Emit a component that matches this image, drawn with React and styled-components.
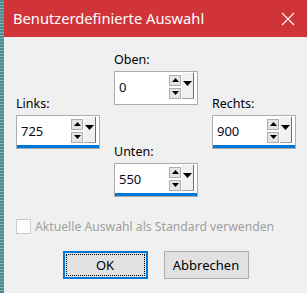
import React from 'react'
import styled, { createGlobalStyle } from 'styled-components'

const GlobalStyle = createGlobalStyle`
  html, body {
    margin: 0;
    padding: 0;
    overflow: hidden;
    background: #f0f0f0;
  }
  body {
    font-family: 'Noto Sans', 'Open Sans', Arial, sans-serif;
    font-size: 12.5px;
    color: #000;
  }
`

const Screen = styled.div`
  display: flex;
  width: 307px;
  height: 293px;
`
const Backdrop = styled.div`
  width: 4px;
  flex-shrink: 0;
  background: repeating-linear-gradient(
    to bottom,
    #4e8c8d 0px,
    #4e8c8d 2px,
    #7db1b1 2px,
    #7db1b1 3px
  );
`
const Dialog = styled.div`
  flex: 1;
  display: flex;
  flex-direction: column;
  background: #f0f0f0;
`
const TitleBar = styled.div`
  height: 37px;
  flex-shrink: 0;
  display: flex;
  align-items: center;
  justify-content: space-between;
  padding: 0 12px 0 9px;
  background: #d13438;
  color: #fff;
  font-size: 14.7px;
`
const Title = styled.span`
  margin-top: -1px;
`
const CloseIcon = styled.svg`
  width: 14px;
  height: 14px;
  display: block;
`
const Body = styled.div`
  display: flex;
  flex-direction: column;
  padding: 15px 0 0 12px;
`
const Fields = styled.div`
  display: flex;
  gap: 14px;
`
const Column = styled.div`
  display: flex;
  flex-direction: column;
  gap: ${(p) => p.$gap || 0}px;
  margin-top: ${(p) => p.$offset || 0}px;
`
const Field = styled.div`
  display: flex;
  flex-direction: column;
  width: 84px;
`
const Label = styled.label`
  line-height: 16px;
  margin-bottom: 3px;
`
const SpinBox = styled.div`
  box-sizing: border-box;
  height: 34px;
  border: 1px solid #acacac;
  background: #fff;
  display: flex;
  flex-direction: column;
`
const SpinRow = styled.div`
  flex: 1;
  display: flex;
  align-items: center;
`
const Underline = styled.div`
  height: 3px;
  background: ${(p) => (p.$active ? '#0078d7' : 'transparent')};
`
const Value = styled.span`
  flex: 1;
  padding-left: 4px;
  font-size: 13px;
  color: #0a0a1e;
`
const Arrows = styled.div`
  display: flex;
  flex-direction: column;
  gap: 2px;
  margin-right: 1px;
`
const ArrowButton = styled.div`
  box-sizing: border-box;
  width: 12px;
  height: 11px;
  border: 1px solid #adadad;
  background: #e5e5e5;
  display: flex;
  align-items: center;
  justify-content: center;
`
const DropButton = styled.div`
  box-sizing: border-box;
  align-self: stretch;
  width: 12px;
  margin: 1px 3px 2px 0;
  background: #f0f0f0;
  border-right: 1px solid #6b6b6b;
  border-bottom: 1px solid #a0a0a0;
  display: flex;
  justify-content: center;
  padding-top: 8px;
`
const Triangle = styled.svg`
  display: block;
`
const CheckRow = styled.div`
  display: flex;
  align-items: center;
  gap: 4px;
  margin-top: 21px;
  font-size: 12.2px;
  color: #a0a0a0;
`
const CheckBox = styled.span`
  box-sizing: border-box;
  width: 15px;
  height: 15px;
  border: 1px solid #cccccc;
  background: #fdfdfd;
`
const Buttons = styled.div`
  display: flex;
  justify-content: center;
  gap: 16px;
  margin: 16px 0 0 -12px;
`
const Button = styled.button`
  box-sizing: border-box;
  width: 85px;
  height: 28px;
  font-family: inherit;
  font-size: 13px;
  color: #000;
  background: #e1e1e1;
  border: ${(p) => (p.$primary ? '2px solid #0078d7' : '1px solid #adadad')};
  outline: ${(p) => (p.$primary ? '1px dotted #000' : 'none')};
  outline-offset: -4px;
  padding: 0;
`

const Up = () => (
  <Triangle width="7" height="4" viewBox="0 0 7 4">
    <polygon points="0,4 3.5,0 7,4" fill="#000" />
  </Triangle>
)
const Down = () => (
  <Triangle width="7" height="4" viewBox="0 0 7 4">
    <polygon points="0,0 7,0 3.5,4" fill="#000" />
  </Triangle>
)

function Spinner({ label, value, active }) {
  return (
    <Field>
      <Label>{label}</Label>
      <SpinBox>
        <SpinRow>
          <Value>{value}</Value>
          <Arrows>
            <ArrowButton>
              <Up />
            </ArrowButton>
            <ArrowButton>
              <Down />
            </ArrowButton>
          </Arrows>
          <DropButton>
            <Triangle width="9" height="5" viewBox="0 0 9 5">
              <polygon points="0,0 9,0 4.5,5" fill="#000" />
            </Triangle>
          </DropButton>
        </SpinRow>
        <Underline $active={active} />
      </SpinBox>
    </Field>
  )
}

export default function App() {
  return (
    <Screen>
      <GlobalStyle />
      <Backdrop />
      <Dialog>
        <TitleBar>
          <Title>Benutzerdefinierte Auswahl</Title>
          <CloseIcon viewBox="0 0 14 14">
            <path d="M1 1 L13 13 M13 1 L1 13" stroke="#fff" strokeWidth="1.1" fill="none" />
          </CloseIcon>
        </TitleBar>
        <Body>
          <Fields>
            <Column $offset={44}>
              <Spinner label="Links:" value="725" active />
            </Column>
            <Column $gap={39}>
              <Spinner label="Oben:" value="0" />
              <Spinner label="Unten:" value="550" active />
            </Column>
            <Column $offset={44}>
              <Spinner label="Rechts:" value="900" active />
            </Column>
          </Fields>
          <CheckRow>
            <CheckBox />
            <span>Aktuelle Auswahl als Standard verwenden</span>
          </CheckRow>
          <Buttons>
            <Button $primary>OK</Button>
            <Button>Abbrechen</Button>
          </Buttons>
        </Body>
      </Dialog>
    </Screen>
  )
}
